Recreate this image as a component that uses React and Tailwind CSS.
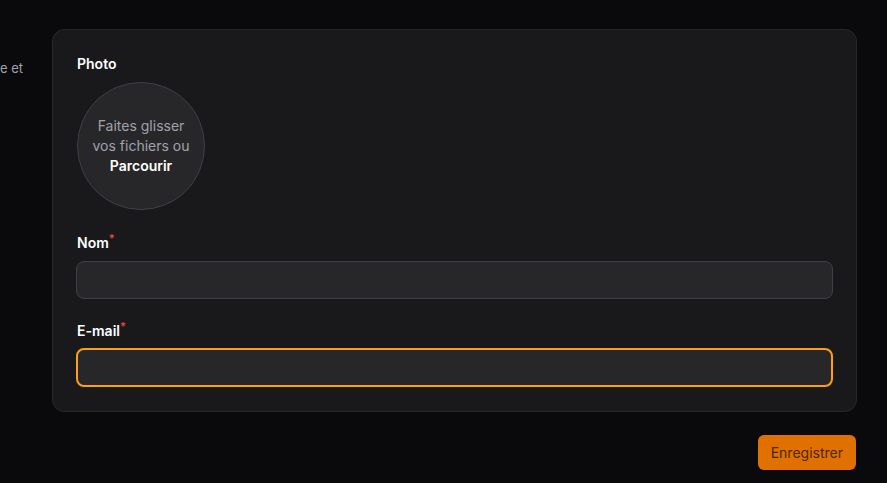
import React from 'react';

function Label({ children, required }) {
  return (
    <label className="block text-sm font-semibold leading-5 text-white">
      {children}
      {required && <span className="text-[#ef4444] text-[11px] align-top leading-none">*</span>}
    </label>
  );
}

export default function App() {
  return (
    <div className="min-h-[483px] bg-[#0a0a0c] font-['Inter','Liberation_Sans',sans-serif] overflow-hidden">
      <div className="flex pt-[29px]">
        <div className="w-[52px] shrink-0 overflow-hidden pt-[29px]">
          <p className="text-[13px] leading-5 text-[#a1a1aa] whitespace-nowrap">e et</p>
        </div>
        <div className="flex-1 mr-[30px]">
          <div className="bg-[#19191b] border border-[#27272a] rounded-xl p-6">
            <Label>Photo</Label>
            <div className="mt-2 w-32 h-32 rounded-full bg-[#27272a] border border-[#3f3f46] flex items-center justify-center text-center text-sm leading-5 text-[#a1a1aa]">
              <div>
                Faites glisser<br />vos fichiers ou<br />
                <span className="font-semibold text-white">Parcourir</span>
              </div>
            </div>

            <div className="mt-[23px]">
              <Label required>Nom</Label>
              <input className="mt-2 -ml-px block w-[calc(100%+2px)] h-[38px] rounded-lg bg-[#27272a] border border-[#3f3f46] outline-none px-3 text-sm text-white" />
            </div>

            <div className="mt-[22px]">
              <Label required>E-mail</Label>
              <input className="mt-[7px] -ml-px block w-[calc(100%+2px)] h-[39px] rounded-lg bg-[#27272a] border-2 border-[#ff9f0a] outline-none px-3 text-sm text-white" />
            </div>
          </div>

          <div className="flex justify-end mt-[23px] mr-px">
            <button className="h-[35px] px-[13px] rounded-md bg-[#e07100] text-[#4a2600] text-sm">
              Enregistrer
            </button>
          </div>
        </div>
      </div>
    </div>
  );
}
